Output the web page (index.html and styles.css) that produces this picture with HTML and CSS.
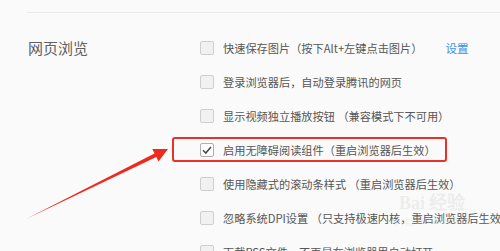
FILE: index.html
```html
<!DOCTYPE html>
<html lang="zh-CN">
<head>
<meta charset="utf-8">
<link rel="stylesheet" href="styles.css">
</head>
<body>
<div class="page">
  <div class="topline"></div>
  <div class="section">
    <div class="title">网页浏览</div>
    <div class="list">
      <div class="row"><span class="cb"></span><span class="label">快速保存图片（按下Alt+左键点击图片）</span><span class="link">设置</span></div>
      <div class="row"><span class="cb"></span><span class="label">登录浏览器后，自动登录腾讯的网页</span></div>
      <div class="row"><span class="cb"></span><span class="label">显示视频独立播放按钮 （兼容模式下不可用）</span></div>
      <div class="row row-hl"><span class="cb cb-on"><svg width="14" height="14" viewBox="0 0 14 14"><polyline points="3,7.2 5.8,10 11,4" fill="none" stroke="#4a4a4a" stroke-width="1.6"/></svg></span><span class="label">启用无障碍阅读组件（重启浏览器后生效）</span><span class="hlbox"></span></div>
      <div class="row"><span class="cb"></span><span class="label">使用隐藏式的滚动条样式 （重启浏览器后生效）</span></div>
      <div class="row"><span class="cb"></span><span class="label">忽略系统DPI设置 （只支持极速内核，重启浏览器后生效）</span></div>
      <div class="row"><span class="cb"></span><span class="label">下载RSS文件，不再是在浏览器里自动打开</span></div>
    </div>
  </div>
  <div class="watermark"><span class="wm-top">Bai 经验</span><span class="wm-url">jingyan.baidu.com</span></div>
  <svg class="arrow" width="500" height="251" viewBox="0 0 500 251"><polygon points="26,219 154.5,153.4 152.3,148.9 168,149 158.5,161.5 156.3,157" fill="#ee2a1f"/></svg>
</div>
</body>
</html>
```

FILE: styles.css
```css
html, body {
  margin: 0;
  padding: 0;
  background: #fafafa;
}
.page {
  position: relative;
  width: 500px;
  height: 251px;
  overflow: hidden;
  font-family: "Noto Sans CJK SC", "Noto Sans", sans-serif;
  color: #555;
}
.topline {
  margin: 12px 0 0 27px;
  height: 1px;
  background: #ebebeb;
}
.section {
  display: flex;
  padding: 18px 0 0 28px;
}
.title {
  flex: none;
  width: 172px;
  font-size: 15px;
  line-height: 34px;
  color: #606060;
}
.list {
  position: relative;
  flex: none;
  display: flex;
  flex-direction: column;
}
.row {
  position: relative;
  display: flex;
  align-items: center;
  height: 34px;
  white-space: nowrap;
}
.cb {
  box-sizing: border-box;
  width: 14px;
  height: 14px;
  border: 1px solid #cfcfcf;
  border-radius: 2px;
  background: #f1f1f1;
  margin-right: 9px;
  flex: none;
  display: flex;
}
.cb-on {
  background: #fff;
  border-color: #b0b0b0;
}
.cb-on svg {
  margin: -1px;
}
.label {
  font-size: 11.2px;
  line-height: 16px;
  color: #565656;
}
.link {
  font-size: 11.6px;
  color: #3d8fe6;
  margin-left: 23px;
}
.hlbox {
  position: absolute;
  left: -28px;
  top: 4px;
  width: 275px;
  height: 25px;
  box-sizing: border-box;
  border: 2px solid #e8312b;
  border-radius: 3px;
}
.watermark {
  position: absolute;
  left: 395px;
  top: 192px;
  display: flex;
  flex-direction: column;
  align-items: center;
  color: rgba(210, 210, 210, 0.35);
  font-family: "Liberation Serif", serif;
}
.wm-top {
  font-size: 18px;
  font-weight: bold;
  line-height: 22px;
}
.wm-url {
  font-size: 10px;
  line-height: 14px;
}
.arrow {
  position: absolute;
  left: 0;
  top: 0;
}
```
